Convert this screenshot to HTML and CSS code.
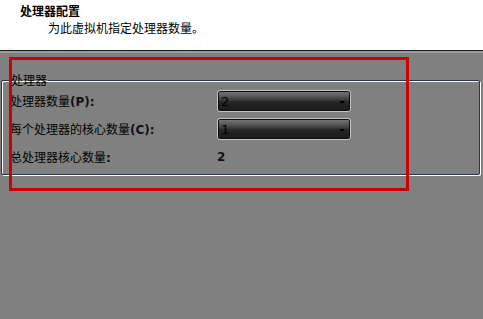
FILE: index.html
```html
<!DOCTYPE html>
<html lang="zh-CN">
<head>
<meta charset="utf-8">
<title>处理器配置</title>
<link rel="stylesheet" href="styles.css">
</head>
<body>
<div class="page">
  <header class="head">
    <div class="title">处理器配置</div>
    <div class="subtitle">为此虚拟机指定处理器数量。</div>
  </header>
  <div class="rule"></div>
  <main class="content">
    <fieldset class="group">
      <legend class="legend">处理器</legend>
      <div class="rows">
        <div class="label">处理器数量<span class="latin">(P):</span></div>
        <div class="combo"><span class="combo-val">2</span><span class="arrow"></span></div>
        <div class="label">每个处理器的核心数量<span class="latin">(C):</span></div>
        <div class="combo"><span class="combo-val">1</span><span class="arrow"></span></div>
        <div class="label">总处理器核心数量<span class="latin">:</span></div>
        <div class="value">2</div>
      </div>
    </fieldset>
  </main>
  <div class="highlight"></div>
</div>
</body>
</html>
```
FILE: styles.css
```css
html, body {
  margin: 0;
  padding: 0;
}
body {
  width: 483px;
  height: 319px;
  overflow: hidden;
  background: #808080;
  font-family: "DejaVu Sans", "Noto Sans CJK SC", sans-serif;
  font-size: 12px;
  color: #000;
}
.page {
  position: relative;
  width: 483px;
  height: 319px;
}
.head {
  height: 51px;
  background: #fff;
  border-bottom: 1px solid #1a1a1a;
  box-sizing: border-box;
  padding: 3px 0 0 20px;
}
.title {
  font-family: "Noto Sans CJK SC", sans-serif;
  font-weight: bold;
  font-size: 12px;
  line-height: 16px;
}
.subtitle {
  font-family: "Noto Sans CJK SC", sans-serif;
  font-size: 12px;
  line-height: 16px;
  margin: 1px 0 0 28px;
}
.rule {
  height: 2px;
  background: #9a9a9a;
}
.content {
  padding: 20px 3px 0 1px;
}
.group {
  margin: 0;
  padding: 3px 0 10px 8px;
  min-width: 0;
  border: 1px solid #2c3844;
  border-radius: 2px;
  box-shadow: 1px 1px 0 #fff, inset 1px 1px 0 #fff;
  height: 102px;
  box-sizing: border-box;
}
.legend {
  font-family: "Noto Sans CJK SC", sans-serif;
  padding: 0 1px;
  margin-left: 0;
  line-height: 14px;
}
.rows {
  display: grid;
  grid-template-columns: 207px 134px;
  grid-auto-rows: 22px;
  row-gap: 6px;
  align-items: center;
}
.label {
  font-family: "Noto Sans CJK SC", sans-serif;
  line-height: 14px;
}
.latin {
  font-family: "DejaVu Sans", sans-serif;
  font-weight: bold;
  color: #101018;
}
.combo {
  height: 22px;
  box-sizing: border-box;
  border: 1px solid #c4c4c4;
  border-radius: 3px;
  box-shadow: inset 0 0 0 1px #0c0c0c;
  background: linear-gradient(#7a7a7a 0%, #5a5a5a 25%, #3a3a3a 45%, #262626 55%, #1a1a1a 100%);
  display: flex;
  align-items: center;
  justify-content: space-between;
  padding: 0 5px 0 3px;
}
.combo-val {
  font-family: "DejaVu Sans", sans-serif;
  font-size: 13px;
  color: #000;
}
.arrow {
  width: 0;
  height: 0;
  border-left: 3px solid transparent;
  border-right: 3px solid transparent;
  border-top: 3px solid #000;
  margin-top: 2px;
}
.value {
  font-family: "DejaVu Sans", sans-serif;
  font-weight: bold;
  color: #101018;
}
.highlight {
  position: absolute;
  left: 9px;
  top: 57px;
  width: 400px;
  height: 134px;
  box-sizing: border-box;
  border: 3px solid #cc0000;
  pointer-events: none;
}
```
